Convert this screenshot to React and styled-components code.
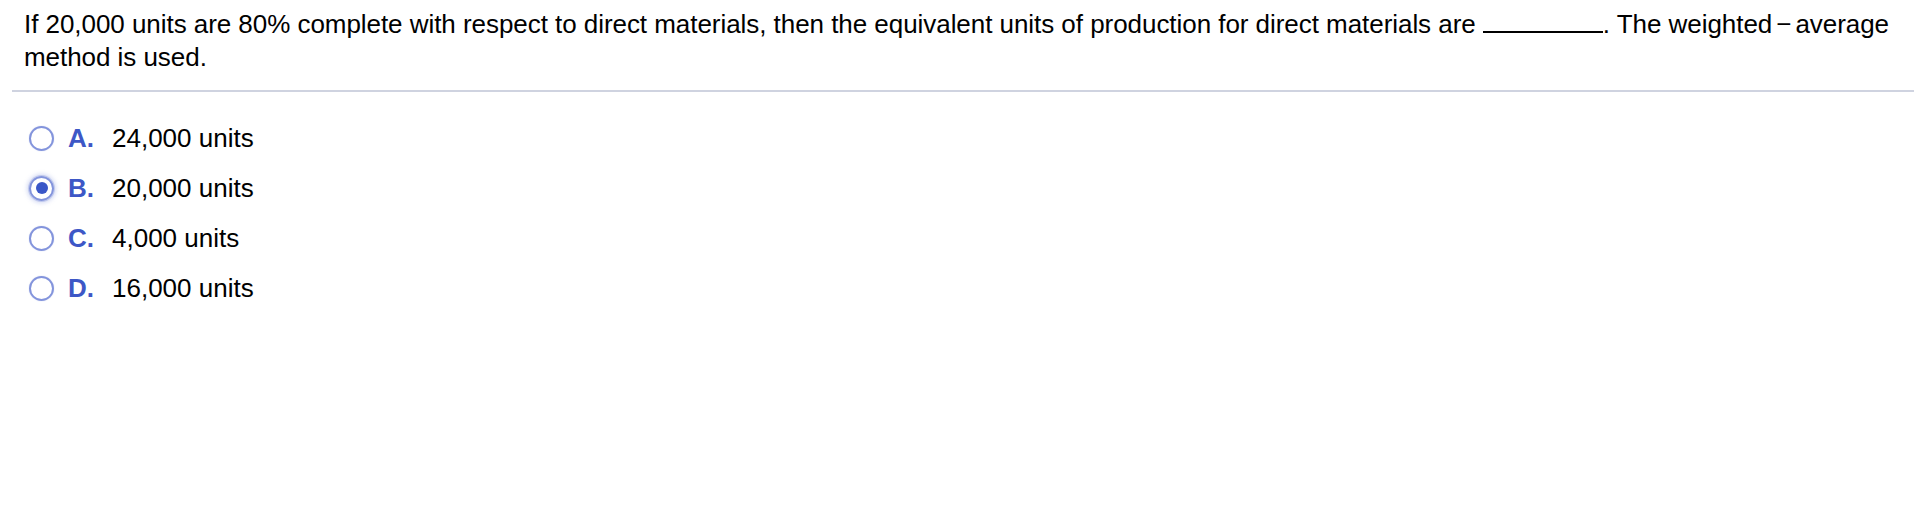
import styled, { createGlobalStyle } from "styled-components";

const GlobalStyle = createGlobalStyle`
  html, body {
    margin: 0;
    padding: 0;
    background: #ffffff;
  }
  body {
    font-family: "Liberation Sans", Arial, Helvetica, sans-serif;
    color: #000000;
  }
`;

const Page = styled.div`
  width: 1914px;
  height: 520px;
  background: #ffffff;
`;

const Question = styled.div`
  padding: 8px 8px 0 24px;
  font-size: 26px;
  line-height: 33px;
  letter-spacing: -0.05px;
`;

const Blank = styled.span`
  display: inline-block;
  width: 120px;
  height: 20px;
  border-bottom: 2px solid #000;
  vertical-align: baseline;
`;

const Minus = styled.span`
  margin: 0 4px;
`;

const Divider = styled.hr`
  margin: 16px 0 0 12px;
  border: none;
  height: 2px;
  background: #cfd3e0;
`;

const Options = styled.ul`
  list-style: none;
  margin: 0;
  padding: 21px 0 0 29px;
`;

const Option = styled.li`
  display: flex;
  align-items: center;
  height: 50px;
  font-size: 26px;
`;

const Radio = styled.span`
  position: relative;
  box-sizing: border-box;
  width: 25px;
  height: 25px;
  border-radius: 50%;
  border: 2px solid #8394dc;
  box-shadow: ${(p) =>
    p.checked
      ? "0 0 0 1px rgba(131,148,220,0.35), 0 0 4px 2px rgba(131,148,220,0.35)"
      : "0 0 1px 0 rgba(131,148,220,0.6)"};
  margin-right: 14px;
  flex-shrink: 0;

  &::after {
    content: "";
    display: ${(p) => (p.checked ? "block" : "none")};
    position: absolute;
    left: 50%;
    top: 50%;
    width: 12px;
    height: 12px;
    margin: -6px 0 0 -6px;
    border-radius: 50%;
    background: #3a57c8;
  }
`;

const Letter = styled.span`
  width: 44px;
  font-weight: bold;
  color: #3d57c6;
`;

const Answer = styled.span`
  color: #000;
`;

const answers = [
  { letter: "A.", text: "24,000 units" },
  { letter: "B.", text: "20,000 units", checked: true },
  { letter: "C.", text: "4,000 units" },
  { letter: "D.", text: "16,000 units" },
];

export default function App() {
  return (
    <Page>
      <GlobalStyle />
      <Question>
        If 20,000 units are 80% complete with respect to direct materials, then
        the equivalent units of production for direct materials are{" "}
        <Blank />. The weighted<Minus>−</Minus>average method is used.
      </Question>
      <Divider />
      <Options>
        {answers.map((a) => (
          <Option key={a.letter}>
            <Radio checked={a.checked} />
            <Letter>{a.letter}</Letter>
            <Answer>{a.text}</Answer>
          </Option>
        ))}
      </Options>
    </Page>
  );
}
